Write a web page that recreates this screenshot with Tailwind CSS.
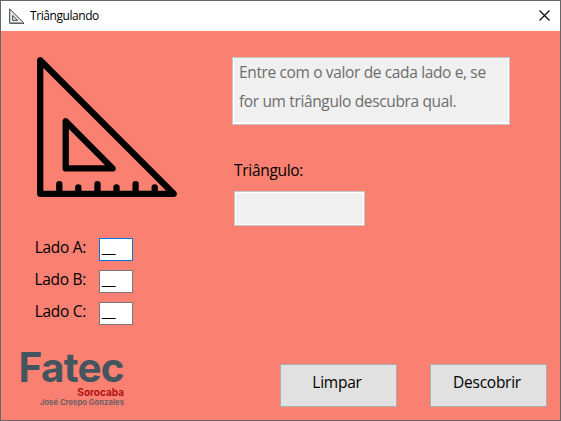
<!DOCTYPE html>
<html lang="pt-BR">
<head>
<meta charset="utf-8">
<title>Triângulando</title>
<script src="https://cdn.jsdelivr.net/npm/@tailwindcss/browser@4"></script>
</head>
<body class="overflow-hidden font-['Open_Sans','Noto_Sans',sans-serif]">
<div class="flex h-[421px] w-[561px] flex-col border border-[#666666] bg-[#fa8072] text-black">
  <header class="flex h-[30px] shrink-0 items-center bg-white pl-[8px] pr-[10px]">
    <svg class="h-4 w-4 shrink-0" viewBox="0 0 16 16" fill="none" stroke="#343a40">
      <path d="M.7 1V15.3H15Z" fill="#eceeef" stroke-width="1"/>
      <path d="M3.7 7.5V12.3H8.5Z" fill="#fff" stroke-width="1"/>
      <path d="M3 15v-1M5 15v-1M7 15v-1M9 15v-1M11 15v-1" stroke-width=".6"/>
    </svg>
    <h1 class="ml-[5px] text-[12px] leading-4 tracking-[-0.43px]">Triângulando</h1>
    <svg class="-mt-[2px] ml-auto h-[11px] w-[11px]" viewBox="0 0 11 11" stroke="#000" stroke-width="1.1"><path d="M.5.5l10 10M10.5.5l-10 10"/></svg>
  </header>
  <main class="flex min-h-0 flex-1">
    <section class="flex w-[231px] shrink-0 flex-col">
      <svg class="ml-[35px] mt-[25px] h-[142px] w-[142px] shrink-0" viewBox="36 56 142 142" fill="none" stroke="#000" stroke-width="6.3" stroke-linecap="round" stroke-linejoin="round">
        <path d="M40.2 60.3V193.8H173.7Z"/>
        <path d="M65.7 121.3V168.4H112.6Z"/>
        <path d="M59.3 193V184.2M97.5 193V184.2M135.6 193V184.2M78.3 193V187.4M116.5 193V187.4M154.7 193V187.4"/>
      </svg>
      <div class="mt-[40px] flex flex-col gap-[9px] text-[15.5px] leading-[19px]">
        <label class="flex h-[23px]"><span class="w-[85px] text-right tracking-[-0.3px]">Lado A:</span><span class="ml-[13px] w-[34px] border border-[#0078d7] bg-white pl-[2px] leading-[17px] tracking-[-0.1px]">__</span></label>
        <label class="flex h-[23px]"><span class="w-[85px] text-right tracking-[-0.3px]">Lado B:</span><span class="ml-[13px] w-[34px] border border-[#7a7a7a] bg-white pl-[2px] leading-[17px] tracking-[-0.1px]">__</span></label>
        <label class="flex h-[23px]"><span class="w-[85px] text-right tracking-[-0.3px]">Lado C:</span><span class="ml-[13px] w-[34px] border border-[#7a7a7a] bg-white pl-[2px] leading-[17px] tracking-[-0.1px]">__</span></label>
      </div>
      <div class="mt-[24px] flex w-[123px] flex-col items-end whitespace-nowrap font-['Inter',sans-serif]">
        <div class="h-[37px] text-[40.5px] font-bold leading-[37px] tracking-[-0.7px] text-[#455560]">Fatec</div>
        <div class="h-[12px] text-[10px] font-bold leading-[12px] text-[#b01217]">Sorocaba</div>
        <div class="h-[10px] text-[7.6px] font-bold leading-[10px] tracking-[0.06px] text-[#6b5f62]">José Crespo Gonzales</div>
      </div>
    </section>
    <section class="flex flex-1 flex-col">
      <div class="mt-[26px] h-[68px] w-[278px] border border-[#c6c6c6] bg-white p-px">
        <div class="h-full bg-[#f0f0f0]"><p class="-mt-px whitespace-nowrap pl-[5px] text-[15.5px] leading-[29px] tracking-[-0.36px] text-[#6d6d6d]">Entre com o valor de cada lado e, se<br>for um triângulo descubra qual.</p></div>
      </div>
      <h2 class="ml-[2px] mt-[35px] h-[21px] text-[15.5px] leading-[21px] tracking-[-0.3px]">Triângulo:</h2>
      <div class="ml-[2px] mt-[10px] h-[35px] w-[131px] border border-[#c6c6c6] bg-white p-px"><div class="h-full bg-[#f0f0f0]"></div></div>
      <div class="mb-[13px] mt-auto flex justify-end gap-[33px] pr-[13px] text-[15.5px] tracking-[-0.25px]">
        <button class="h-[43px] w-[117px] border border-[#adadad] bg-[#e1e1e1] pb-[5px] pr-[3px]">Limpar</button>
        <button class="h-[43px] w-[117px] border border-[#adadad] bg-[#e1e1e1] pb-[5px] pr-[3px]">Descobrir</button>
      </div>
    </section>
  </main>
</div>
</body>
</html>
